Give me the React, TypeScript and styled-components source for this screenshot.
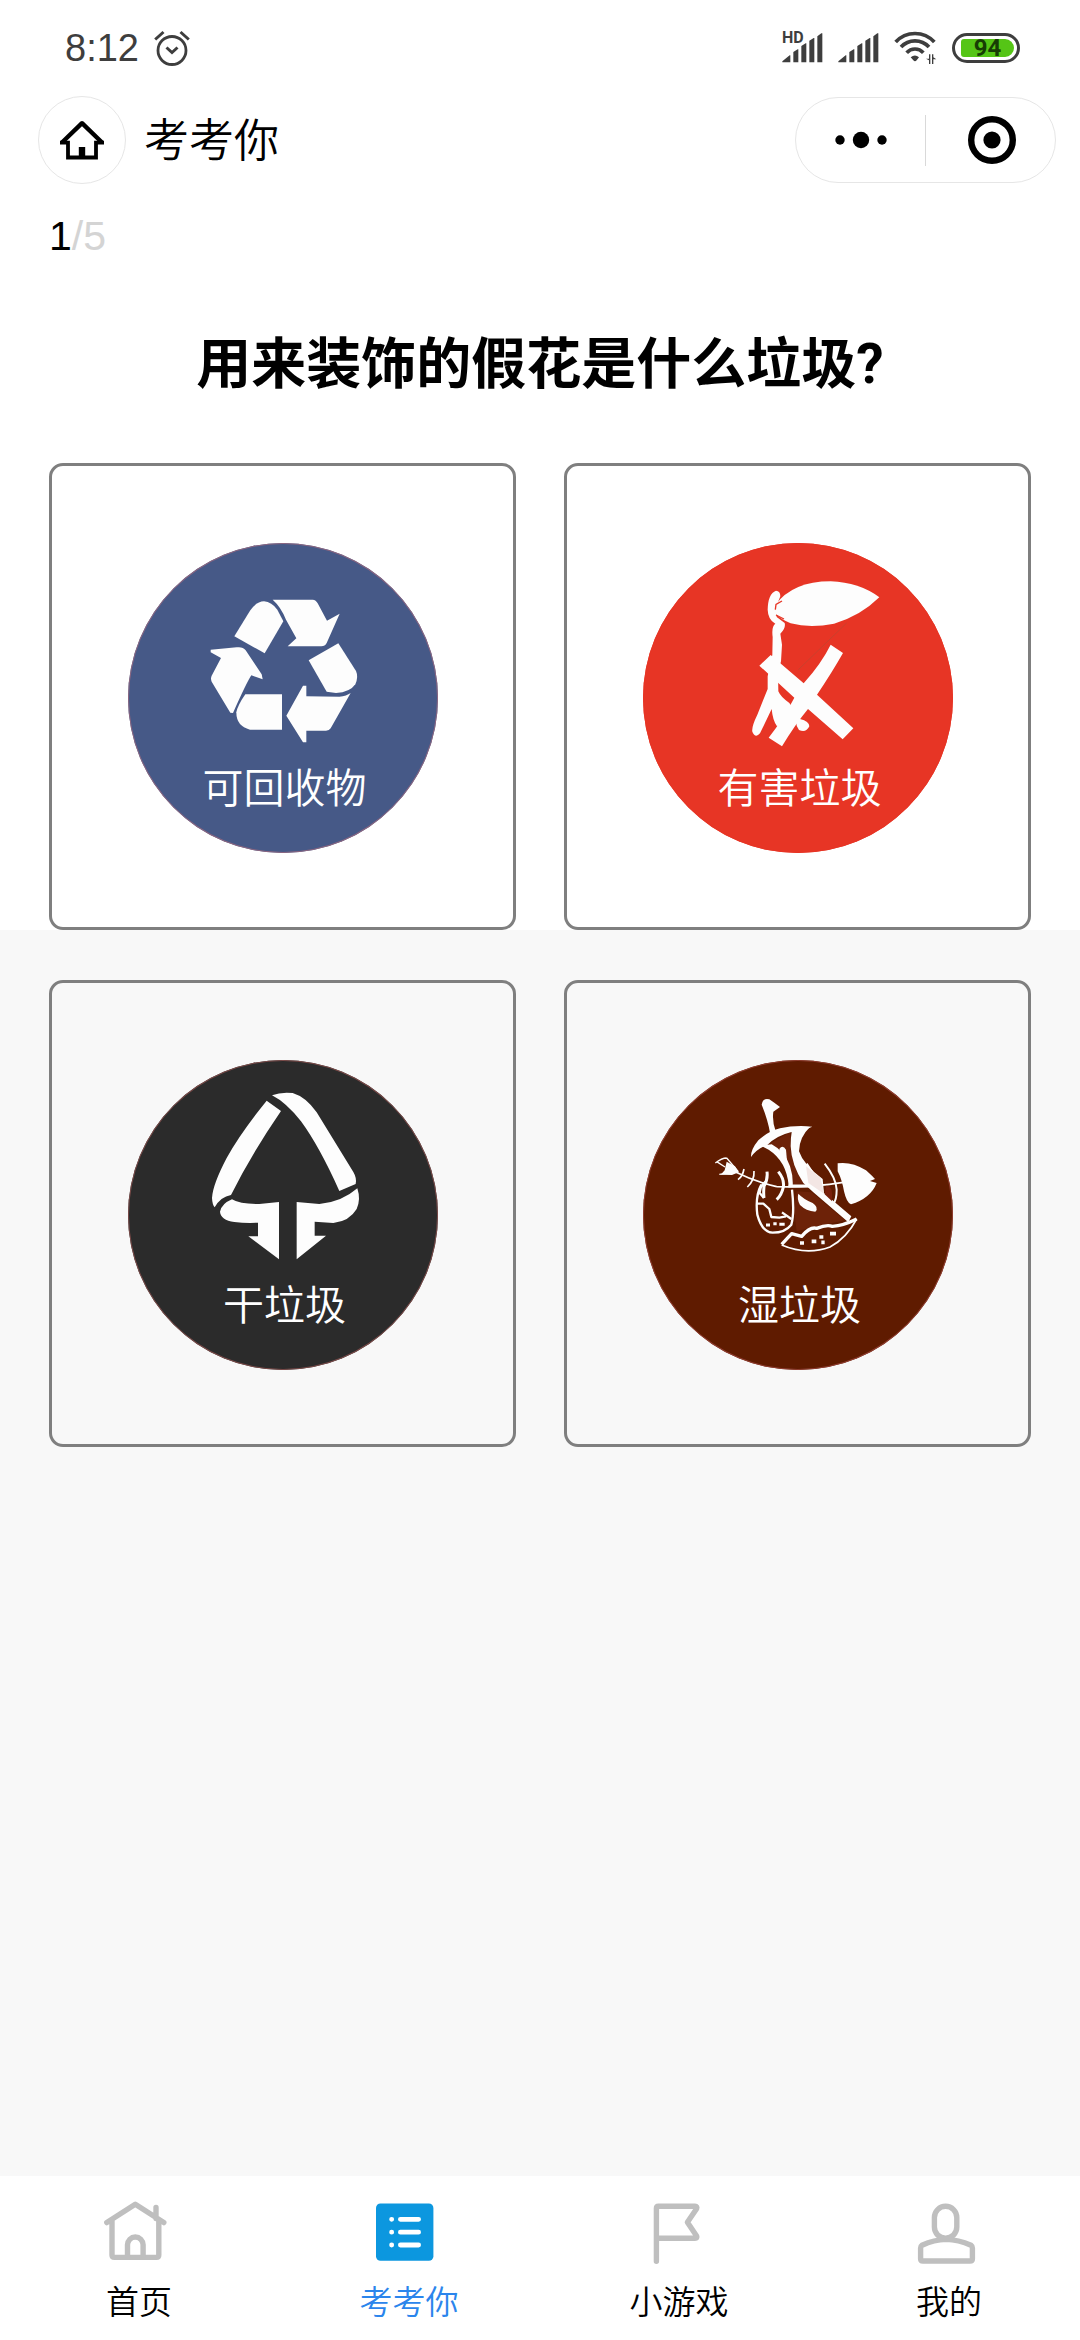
import React, { useState } from "react";
import styled, { createGlobalStyle } from "styled-components";

const GlobalStyle = createGlobalStyle`
  * { box-sizing: border-box; }
  body {
    margin: 0;
    background: #f8f8f8;
    color: #000;
    font-family: Roboto, "Noto Sans CJK SC", sans-serif;
    font-weight: 350;
  }
  button {
    margin: 0;
    padding: 0;
    border: 0;
    background: none;
    color: inherit;
    font: inherit;
    cursor: pointer;
  }
  svg { display: block; flex: none; }
`;

const Page = styled.div`
  display: flex;
  flex-direction: column;
  min-height: 100vh;
`;

const StatusBar = styled.div`
  display: flex;
  align-items: center;
  justify-content: space-between;
  height: 96px;
  padding: 0 60px 0 65px;
  background: #fff;
  color: #3e3e3e;
`;

const StatusGroup = styled.div<{ $gap: number }>`
  display: flex;
  align-items: center;
  gap: ${(p) => p.$gap}px;
`;

const Clock = styled.span`
  font-family: "Liberation Sans", sans-serif;
  font-size: 38px;
  font-weight: 400;
  line-height: 50px;
`;

const SignalBox = styled.span`
  position: relative;
  display: block;
`;

const HdMark = styled.span`
  position: absolute;
  left: 0;
  top: -2px;
  font-size: 16px;
  font-weight: 700;
  line-height: 14px;
`;

const Battery = styled.span`
  display: flex;
  width: 68px;
  height: 30px;
  padding: 3px 3px 3px 6px;
  border: 3px solid #3e3e3e;
  border-radius: 15px;
`;

const BatteryLevel = styled.span`
  flex: 1;
  border-radius: 3px 9px 9px 3px;
  background: #55c516;
  color: #173d04;
  font-size: 24px;
  font-weight: 700;
  line-height: 19px;
  text-align: center;
`;

const NavBar = styled.header`
  display: flex;
  align-items: center;
  padding: 0 24px 0 38px;
  background: #fff;
`;

const HomeButton = styled.button`
  display: grid;
  place-items: center;
  width: 88px;
  height: 88px;
  border: 1px solid #e6e6e6;
  border-radius: 50%;
`;

const NavTitle = styled.h1`
  flex: 1;
  margin: 0 0 0 18px;
  padding-top: 4px;
  font-size: 45px;
  font-weight: 350;
  line-height: 60px;
`;

const Capsule = styled.div`
  display: grid;
  grid-template-columns: 1fr 1px 1fr;
  align-items: center;
  width: 261px;
  height: 86px;
  border: 1px solid #e6e6e6;
  border-radius: 43px;
`;

const CapsuleButton = styled.button`
  display: grid;
  place-items: center;
  height: 84px;
`;

const Divider = styled.span`
  height: 51px;
  background: #d9d9d9;
`;

const QuestionPanel = styled.section`
  padding: 24px 49px 0;
  background: #fff;
`;

const Progress = styled.p`
  margin: 0;
  font-family: "Liberation Sans", sans-serif;
  font-size: 41px;
  font-weight: 400;
  line-height: 56px;
`;

const Total = styled.span`
  color: #d4d4d4;
`;

const Question = styled.h2`
  margin: 60px 0 59px;
  font-size: 55px;
  font-weight: 700;
  line-height: 80px;
  text-align: center;
`;

const OptionRow = styled.div<{ $inset?: boolean }>`
  display: grid;
  grid-template-columns: 1fr 1fr;
  gap: 48px;
  padding: ${(p) => (p.$inset ? "50px 49px" : "0")};
`;

const OptionCard = styled.button`
  display: grid;
  place-items: center;
  aspect-ratio: 1;
  padding-top: 2px;
  border: 3px solid #7f7f7f;
  border-radius: 14px;
`;

const Sign = styled.span<{ $color: string; $edge: string }>`
  display: flex;
  flex-direction: column;
  align-items: center;
  width: 310px;
  height: 310px;
  border-radius: 50%;
  background: ${(p) => p.$color};
  box-shadow: inset 0 0 0 1px ${(p) => p.$edge};
  color: #fff;
`;

const SignLabel = styled.span`
  padding-left: 4px;
  font-size: 41px;
  line-height: 53px;
`;

const TabBar = styled.nav`
  position: sticky;
  bottom: 0;
  display: grid;
  grid-template-columns: repeat(4, 1fr);
  height: 164px;
  margin-top: auto;
  background: #fff;
`;

const Tab = styled.button<{ $active: boolean }>`
  display: flex;
  flex-direction: column;
  align-items: center;
  padding-top: 24px;
  color: ${(p) => (p.$active ? "#2b85ec" : "#000")};
`;

const TabLabel = styled.span`
  margin-top: 13px;
  padding-left: 8px;
  font-size: 33px;
  line-height: 48px;
`;

function AlarmIcon() {
  return (
    <svg width="36" height="36" viewBox="0 0 36 36" fill="none" stroke="#3e3e3e" strokeWidth="2.8">
      <circle cx="18" cy="20.5" r="14" />
      <path d="M12.5 17.5l5.5 5 5.5-5M1.2 9.5L9.5 2M34.8 9.5L26.5 2" strokeWidth="3" />
    </svg>
  );
}

function SignalIcon() {
  return (
    <svg width="41" height="30" viewBox="65 95 123 90" fill="#3e3e3e">
      <path d="M66 180L88 162h2v21H66zM99 152l13-8h2v39H99zM123 134l13-8h2v57h-15zM147 118l13-8h2v73h-15zM171 105l12-9h3v87h-15z" />
    </svg>
  );
}

function WifiIcon() {
  return (
    <svg width="43" height="34" viewBox="402 95 129 102" fill="none" stroke="#3e3e3e" strokeWidth="11">
      <path d="M407 128A78.6 78.6 0 0 1 523 128M423 143A57 57 0 0 1 507 143M440 160A34 34 0 0 1 490 160" />
      <path d="M452 174Q465 163 477 174L470 183Q465 189 460 183Z" fill="#3e3e3e" stroke="none" />
      <path d="M511 165v29h-4v-11l-9-5h9v-13zM516 165h4v9l9 6h-9v14h-4z" fill="#3e3e3e" stroke="none" />
    </svg>
  );
}

function HouseIcon() {
  return (
    <svg width="46" height="40" viewBox="0 0 46 40" fill="none" stroke="#000">
      <path d="M3 22.5L23 3.2l20 19.3" strokeWidth="4.4" strokeLinejoin="round" />
      <path d="M1 22.6h8v14.9h28V22.6h8" strokeWidth="3.8" />
      <path d="M23 27v11" strokeWidth="6.4" />
    </svg>
  );
}

function DotsIcon() {
  return (
    <svg width="52" height="18" viewBox="0 0 52 18">
      <circle cx="5" cy="9" r="4.7" />
      <circle cx="26" cy="9" r="8.2" />
      <circle cx="47" cy="9" r="4.7" />
    </svg>
  );
}

function TargetIcon() {
  return (
    <svg width="50" height="50" viewBox="0 0 50 50">
      <circle cx="26" cy="25" r="20.8" fill="none" stroke="#000" strokeWidth="6.4" />
      <circle cx="26" cy="25" r="8.6" />
    </svg>
  );
}

function RecycleArt() {
  return (
    <svg width="310" height="220" viewBox="26 40 930 660" fill="#fdfdfd">
      <path d="M345 320L392 243Q412 215 434 215Q457 217 474 240L492 275L436 371Z" />
      <path d="M460 210H580Q590 211 595 221L623 273L661 252L622 340Q617 350 606 350H505L531 326L500 270Q485 232 460 210Z" />
      <path d="M568 392L657 341L710 424Q718 442 708 464Q692 488 650 490L622 486Z" />
      <path d="M694 490L634 596Q630 603 620 603H561V638H551L501 558L551 468H561V500L660 501Q682 499 694 490Z" />
      <path d="M378 494H488V600H392Q351 590 351 548Q355 527 378 494Z" />
      <path d="M274 360L352 353Q370 350 379 362L427 434L430 449L396 437Q382 458 341 550L333 549L277 456Q273 446 277 438L305 385L274 368Z" />
    </svg>
  );
}

function HarmfulArt() {
  return (
    <svg width="310" height="220" viewBox="39 40 930 660" fill="#fdfdfd">
      <path d="M650 280L505 420" stroke="#c9412d" strokeWidth="3" />
      <path d="M436 226Q488 155 602 155Q688 158 748 203Q690 260 612 282Q540 296 482 281Q452 268 436 252Z" />
      <path d="M451 200Q451 184 438 183Q414 192 413 240Q414 270 436 282Q424 290 428 322L427 375L413 440V478L382 555Q364 592 367 606Q376 627 390 611L425 538Q428 572 441 590L500 560Q494 585 507 601Q528 611 538 590Q538 575 510 568L478 520Q452 502 445 485L444 430L453 395L456 345L451 312Q468 296 464 280L440 262L437 235Z" />
      <path d="M422 376L521 461Q575 400 602 345L639 370Q605 430 561 495L670 596L638 629L534 538Q495 585 456 650L416 624Q460 568 493 504L388 408Z" />
      <path d="M456 214L438 224L436 240M438 256L462 268" fill="none" stroke="#e73525" strokeWidth="4" />
    </svg>
  );
}

function ResidualArt() {
  return (
    <svg width="310" height="220" viewBox="26 31 930 660" fill="#fdfdfd">
      <path d="M442 153L485 184Q395 315 335 436Q304 441 286 473Q279 465 278 445Q280 405 322 325Q362 252 442 153Z" />
      <path d="M458 137Q485 126 520 130Q560 142 592 188L702 367Q713 386 709 403L660 424Q600 290 545 215Q500 158 458 137Z" />
      <path d="M338 449Q362 464 420 463L479 457V629L387 560H416V519Q380 521 345 517Q304 511 302 486Q307 462 338 449Z" />
      <path d="M532 457L600 463Q666 458 714 416Q725 450 712 478Q690 515 642 520L586 516V558H620L532 629Z" />
    </svg>
  );
}

function FoodArt() {
  return (
    <svg width="310" height="220" viewBox="39 31 930 660" fill="none" stroke="#fdfdfd" strokeWidth="5" strokeLinejoin="round">
      {/* apple core */}
      <g stroke="none">
        <path d="M412 286L480 248L482 300L530 400L488 405Q480 340 440 305Z" fill="#6d2208" />
        <g fill="#fdfdfd">
          <path d="M395 165Q398 144 418 149L434 160L450 172L430 186Q426 215 437 245L420 250Q414 212 395 165Z" />
          <path d="M363 322Q362 300 385 272Q412 246 450 236Q495 226 547 231L520 242L482 248Q440 258 412 286Q382 296 363 322Z" />
          <path d="M486 240L540 232Q508 262 507 305Q520 345 578 388L582 430L664 500L655 518L550 428L520 400Q484 345 482 290Q482 262 486 240Z" />
          <path d="M392 288L425 284Q466 306 480 350Q490 380 488 410L476 408Q470 335 416 300Z" />
          <path d="M448 298Q458 284 468 300L472 345L452 318Z" />
        </g>
      </g>
      {/* fish bone */}
      <path d="M623 341Q665 335 708 362Q730 382 735 388L720 394L740 400Q722 446 663 464Q650 460 642 425Q636 390 623 365Z" fill="#fdfdfd" stroke="none" />
      <path d="M315 366Q375 396 440 411M440 411Q540 414 640 398" />
      <path d="M475 409H575" strokeWidth="9" />
      <path d="M256 340Q275 325 290 325M260 336L285 352M290 325L325 366M268 374L325 366" strokeWidth="4" />
      <path d="M290 336L315 350L326 368L306 376L272 375L284 362Z" fill="#fdfdfd" stroke="none" />
      <path d="M342 358Q338 380 324 390M372 364Q374 392 352 412" />
      <path d="M411 366Q414 390 402 410Q400 430 402 445M445 366Q464 390 460 412Q455 436 440 450" strokeWidth="9" />
      <path d="M530 342L570 402M584 342Q618 385 620 420Q620 450 610 462" strokeWidth="6" />
      <path d="M528 350L572 385L582 432L535 400Z" fill="#f3e6e4" stroke="none" />
      <path d="M588 408Q606 410 606 430V455L584 434Z" fill="#78200c" stroke="none" />
      {/* leftovers */}
      <path d="M500 425L545 428L645 512L560 530L500 545L492 480Z" fill="#6d2208" stroke="none" />
      <path d="M394 405Q375 440 382 495Q396 548 428 549Q465 549 484 525Q494 490 486 420" strokeWidth="7" />
      <path d="M408 395Q388 410 389 430L402 445M381 462H400L418 478L424 502L448 504L468 500M456 488L484 508" strokeWidth="7" />
      <path d="M408 526h12M430 522h10M448 524h16" strokeWidth="9" />
      <path d="M505 432Q520 448 548 460Q568 474 556 486Q528 484 510 466Q500 448 505 432Z" fill="#fdfdfd" stroke="none" />
      <path d="M455 584L485 552L515 560Q540 530 560 536Q590 524 607 530Q640 528 680 508" strokeWidth="10" />
      <path d="M455 586Q530 618 600 592Q650 565 680 508" />
      <path d="M545 575h14M568 562h12M600 552h18M510 580h12M574 578h10" strokeWidth="11" />
    </svg>
  );
}

const tabStroke = {
  width: 66,
  height: 66,
  viewBox: "0 0 66 66",
  fill: "none",
  stroke: "#bfbfbf",
  strokeWidth: 5.4,
  strokeLinecap: "round" as const,
  strokeLinejoin: "round" as const,
};

function TabHomeIcon() {
  return (
    <svg {...tabStroke}>
      <path d="M4.8 22.6L33.3 4.2l28.5 18.4M54 7.5v11M10 20v35q0 2.4 2.4 2.4h42q2.4 0 2.4-2.4V20" />
      <path d="M25.5 57V44.8a7.8 7.8 0 0 1 15.6 0V57" strokeLinecap="butt" />
    </svg>
  );
}

function TabListIcon() {
  return (
    <svg width="66" height="66" viewBox="0 0 66 66">
      <rect x="4" y="3.4" width="57.4" height="57.4" rx="4.5" fill="#0c97df" />
      <g stroke="#fff" strokeWidth="4.8" strokeLinecap="round">
        <path d="M28.4 19.3h18.2M28.4 32.2h18.2M28.4 45h18.2M19.6 19.3h.1M19.6 32.2h.1M19.6 45h.1" />
      </g>
    </svg>
  );
}

function TabFlagIcon() {
  return (
    <svg {...tabStroke}>
      <path d="M14.4 61.2V8.3q0-2 2-2H53q2.6 0 1.6 2.4L45.4 22.3l9.2 13.6q1 2.4-1.6 2.4H14.4" />
    </svg>
  );
}

function TabUserIcon() {
  return (
    <svg {...tabStroke}>
      <rect x="22.4" y="6.3" width="22.4" height="32" rx="11.2" />
      <path d="M34.2 39.4Q22 39.6 10 45.3q-1.4 1-1.4 2.8v10.6q0 2.3 2.3 2.3h47.2q2.3 0 2.3-2.3V48.1q0-1.8-1.4-2.8Q46.4 39.6 34.2 39.4z" />
    </svg>
  );
}

interface Option {
  label: string;
  color: string;
  edge: string;
  Art: () => React.JSX.Element;
}

const optionRows: Option[][] = [
  [
    { label: "可回收物", color: "#465987", edge: "#8c6680", Art: RecycleArt },
    { label: "有害垃圾", color: "#e73525", edge: "#e73525", Art: HarmfulArt },
  ],
  [
    { label: "干垃圾", color: "#2b2b2b", edge: "#7a4a48", Art: ResidualArt },
    { label: "湿垃圾", color: "#5f1b00", edge: "#8f3d30", Art: FoodArt },
  ],
];

const tabs = [
  { label: "首页", Icon: TabHomeIcon },
  { label: "考考你", Icon: TabListIcon },
  { label: "小游戏", Icon: TabFlagIcon },
  { label: "我的", Icon: TabUserIcon },
];

function OptionButton({ option }: { option: Option }) {
  const { label, color, edge, Art } = option;
  return (
    <OptionCard type="button">
      <Sign $color={color} $edge={edge}>
        <Art />
        <SignLabel>{label}</SignLabel>
      </Sign>
    </OptionCard>
  );
}

export default function App() {
  const [active, setActive] = useState(1);

  return (
    <Page>
      <GlobalStyle />
      <StatusBar>
        <StatusGroup $gap={15}>
          <Clock>8:12</Clock>
          <AlarmIcon />
        </StatusGroup>
        <StatusGroup $gap={15}>
          <SignalBox>
            <HdMark>HD</HdMark>
            <SignalIcon />
          </SignalBox>
          <SignalIcon />
          <WifiIcon />
          <Battery>
            <BatteryLevel>94</BatteryLevel>
          </Battery>
        </StatusGroup>
      </StatusBar>

      <NavBar>
        <HomeButton type="button" aria-label="首页">
          <HouseIcon />
        </HomeButton>
        <NavTitle>考考你</NavTitle>
        <Capsule>
          <CapsuleButton type="button" aria-label="更多">
            <DotsIcon />
          </CapsuleButton>
          <Divider />
          <CapsuleButton type="button" aria-label="关闭">
            <TargetIcon />
          </CapsuleButton>
        </Capsule>
      </NavBar>

      <main>
        <QuestionPanel>
          <Progress>
            1<Total>/5</Total>
          </Progress>
          <Question>用来装饰的假花是什么垃圾?</Question>
          <OptionRow>
            {optionRows[0].map((option) => (
              <OptionButton key={option.label} option={option} />
            ))}
          </OptionRow>
        </QuestionPanel>
        <OptionRow $inset>
          {optionRows[1].map((option) => (
            <OptionButton key={option.label} option={option} />
          ))}
        </OptionRow>
      </main>

      <TabBar>
        {tabs.map(({ label, Icon }, index) => (
          <Tab key={label} type="button" $active={index === active} onClick={() => setActive(index)}>
            <Icon />
            <TabLabel>{label}</TabLabel>
          </Tab>
        ))}
      </TabBar>
    </Page>
  );
}
